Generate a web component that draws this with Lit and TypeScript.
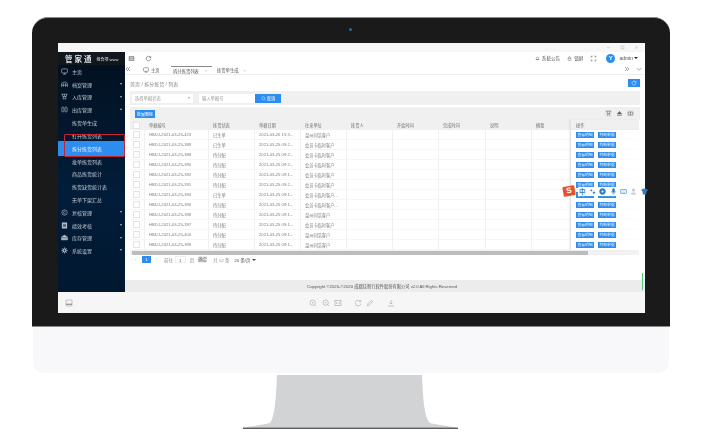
import { LitElement, css, html, svg } from 'lit';
import { customElement } from 'lit/decorators.js';

const NAV = [
  { label: '主页', icon: 'monitor' },
  { label: '档案管理', icon: 'book', caret: 'down' },
  { label: '入库管理', icon: 'shelf', caret: 'down' },
  { label: '出库管理', icon: 'columns', caret: 'up' },
  { label: '拣货单生成', sub: true },
  { label: '打开拣货列表', sub: true },
  { label: '拆分拣货列表', sub: true, active: true },
  { label: '批单拣货列表', sub: true },
  { label: '商品拣货统计', sub: true },
  { label: '拣货缺货统计表', sub: true },
  { label: '无单下架汇总', sub: true },
  { label: '复核管理', icon: 'circle', caret: 'down' },
  { label: '绩效考核', icon: 'list', caret: 'down' },
  { label: '库存管理', icon: 'box', caret: 'down' },
  { label: '系统设置', icon: 'gear', caret: 'down' },
];

const COLS = ['单据编号', '拣货状态', '单据日期', '往来单位', '拣货人', '开始时间', '完成时间', '说明', '摘要'];

const W = '温州同浩客户';
const H = '会员卡临时客户';
const ROWS = [
  ['423', '已生单', '03-26 15:3...', W],
  ['389', '已生单', '03-25 09:2...', H],
  ['388', '待分配', '03-25 09:2...', H],
  ['390', '待分配', '03-25 09:2...', H],
  ['392', '待分配', '03-25 09:1...', H],
  ['391', '待分配', '03-25 09:2...', H],
  ['394', '已生单', '03-25 09:1...', H + '...'],
  ['396', '待分配', '03-25 09:1...', H + '...'],
  ['398', '待分配', '03-25 09:1...', W],
  ['397', '待分配', '03-25 09:1...', H],
  ['400', '待分配', '03-25 09:1...', W],
  ['399', '待分配', '03-25 09:1...', W],
];

const ICONS: Record<string, unknown> = {
  minus: svg`<path d="M2.5 6h7"/>`,
  square: svg`<rect x="2.5" y="2.5" width="7" height="7"/>`,
  close: svg`<path d="M3 3l6 6M9 3l-6 6"/>`,
  monitor: svg`<rect x="1" y="1.5" width="10" height="7" rx="1.5"/><path d="M6 8.5v2M3.5 10.5h5"/>`,
  book: svg`<path d="M1 10V5c0-2 2-3 5-3s5 1 5 3v5M1 7h10M4 4v6M8 4v6"/>`,
  shelf: svg`<path d="M1 2h10M2 2l1 4h6l1-4M4 6v4M8 6v4M3 10h6M6 2v4"/>`,
  columns: svg`<rect x="1.5" y="2" width="3.5" height="8" rx=".6"/><rect x="7" y="2" width="3.5" height="8" rx=".6"/>`,
  circle: svg`<circle cx="6" cy="6" r="4.6"/><path d="M7.6 4.6a2 2 0 1 0 0 2.8"/>`,
  list: svg`<rect x="2" y="1.5" width="8" height="9" fill="currentColor"/><path d="M3.5 4h5M3.5 6h5M3.5 8h5" stroke="#02162c"/>`,
  box: svg`<path d="M1 5l5-3 5 3v5H1z" fill="currentColor"/><path d="M1 6.5h10" stroke="#02162c"/>`,
  gear: svg`<circle cx="6" cy="6" r="2.6" stroke-width="2"/><path d="M6 1v1.6M6 9.4V11M1 6h1.6M9.4 6H11M2.5 2.5l1.1 1.1M8.4 8.4l1.1 1.1M2.5 9.5l1.1-1.1M8.4 3.6l1.1-1.1" stroke-width="1.6"/>`,
  menu: svg`<path d="M2 2.5h8v7H2zM2 5h8M2 7h8"/>`,
  refresh: svg`<path d="M9.5 4.2A4 4 0 1 0 10 6.5M9.8 2v2.6H7.2"/>`,
  bell: svg`<path d="M3 8.5V5.5a3 3 0 0 1 6 0v3zM2 8.5h8M5.5 10h1"/>`,
  lock: svg`<rect x="2.5" y="5" width="7" height="5"/><path d="M4 5V3.5a2 2 0 0 1 4 0V5"/>`,
  expand: svg`<path d="M2 4.5V2h2.5M7.5 2H10v2.5M10 7.5V10H7.5M4.5 10H2V7.5"/>`,
  left2: svg`<path d="M6 2L2 6l4 4M10 2L6 6l4 4"/>`,
  right2: svg`<path d="M2 2l4 4-4 4M6 2l4 4-4 4"/>`,
  chevron: svg`<path d="M1.5 4L6 8.5 10.5 4"/>`,
  search: svg`<circle cx="5.4" cy="5.4" r="3.6"/><path d="M8 8l2.6 2.6"/>`,
  filter: svg`<path d="M1.5 2h9M3 2l1 4h4l1-4M4.5 6v4M7.5 6v4"/>`,
  up: svg`<path d="M6 2.5L10 7H2z" fill="currentColor"/><path d="M2 9.5h8"/>`,
  grid: svg`<path d="M2 3.5h8v5H2zM6 3.5v5"/>`,
  dock: svg`<rect x="1.5" y="1.5" width="9" height="9" rx="1"/><path d="M1.5 8h9" stroke-width="2"/>`,
  zoomin: svg`<circle cx="5.5" cy="5.5" r="4"/><path d="M8.5 8.5l2 2M5.5 4.5v2M4.5 5.5h2"/>`,
  zoomout: svg`<circle cx="5.5" cy="5.5" r="4"/><path d="M8.5 8.5l2 2M4 5.5h3"/>`,
  fit: svg`<rect x="1.5" y="2" width="9" height="8"/><path d="M4 4.5v3M8 4.5v3M6 5v.1M6 7v.1"/>`,
  rotate: svg`<path d="M9.5 3.6A4.2 4.2 0 1 0 10.3 7M9.8 1.6v2.6H7.2"/>`,
  pen: svg`<path d="M2 10l1-3 5-5 2 2-5 5z"/>`,
  download: svg`<path d="M6 1.5v6M3.8 5.4L6 7.6l2.2-2.2M1.5 10.5h9"/>`,
  dots: svg`<circle cx="4" cy="4" r="1.2" fill="currentColor"/><circle cx="8.5" cy="8" r="1.5" fill="currentColor"/>`,
  mic: svg`<rect x="4.2" y="1" width="3.6" height="6.4" rx="1.8" fill="currentColor"/><path d="M2.6 5.6a3.4 3.4 0 0 0 6.8 0M6 9v2"/>`,
  keyboard: svg`<rect x="1" y="2.5" width="10" height="7" rx=".8"/><path d="M3 7.5h6M3 5h6" stroke-dasharray="1 1"/>`,
  person: svg`<circle cx="6" cy="3.6" r="2.2" fill="currentColor"/><path d="M2 10.5c0-3 8-3 8 0z" fill="currentColor"/>`,
  shirt: svg`<path d="M1 3l3-1.5h4L11 3l-1 2.5-1.4-.6V10.5H3.4V4.9L2 5.5z" fill="currentColor"/>`,
  dial: svg`<circle cx="6" cy="6" r="5" fill="currentColor"/><circle cx="6" cy="6" r="1.7" fill="#fff" stroke="none"/>`,
};

function icon(name: string, cls = '') {
  return html`<svg class="ic ${cls}" viewBox="0 0 12 12">${ICONS[name]}</svg>`;
}

@customElement('app-root')
export class AppRoot extends LitElement {
  static styles = css`
    :host {
      display: block;
      position: relative;
      box-sizing: border-box;
      width: 712px;
      height: 445px;
      padding: 17px 0 0 32px;
      overflow: hidden;
      background: #fff;
      font-family: 'Liberation Sans', 'Noto Sans CJK SC', sans-serif;
      font-size: 5px;
      color: #666;
    }
    .ic {
      display: block;
      width: 7px;
      height: 7px;
      fill: none;
      stroke: currentColor;
      stroke-width: 1;
      flex: none;
    }
    .bezel {
      box-sizing: border-box;
      width: 638px;
      height: 310px;
      padding: 25px 25px 14px 26px;
      background: #1a1a1a;
      border-top: 1px solid #8a8a8a;
      border-bottom: 1px solid #8a8a8a;
      border-radius: 16px 16px 0 0;
      position: relative;
    }
    .camera {
      position: absolute;
      left: 317px;
      top: 10px;
      width: 3px;
      height: 3px;
      border-radius: 50%;
      background: #2b6f94;
    }
    .chin {
      width: 636px;
      height: 46px;
      margin-left: 1px;
      border-radius: 0 0 10px 10px;
      background: #f8f7fa;
    }
    .stand {
      display: block;
      margin: 2px 0 0 211px;
    }
    .screen {
      width: 587px;
      height: 270px;
      background: #f6f6f6;
      display: flex;
      flex-direction: column;
      filter: blur(0.5px);
    }
    .titlebar {
      height: 9px;
      flex: none;
      display: flex;
      justify-content: flex-end;
      align-items: center;
      gap: 9px;
      padding-right: 6px;
      color: #aaa;
    }
    .titlebar .ic { width: 5px; height: 5px; }
    .body { display: flex; height: 240px; flex: none; }
    .side {
      width: 67px;
      flex: none;
      background: linear-gradient(#02101f, #021d3a 60%, #01182f);
      border-bottom: 1px solid #111;
      box-sizing: border-box;
      color: #c3cad2;
    }
    .logo {
      height: 13px;
      background: #12171d;
      display: flex;
      align-items: center;
      padding-left: 7px;
      gap: 3px;
      color: #dfe3e6;
      white-space: nowrap;
    }
    .logo b { font-size: 7.5px; letter-spacing: 2px; font-weight: 700; }
    .logo span { font-size: 4px; }
    .item {
      height: 12.8px;
      display: flex;
      align-items: center;
      padding-left: 3px;
      white-space: nowrap;
      position: relative;
      font-size: 5px;
    }
    .item .ic { width: 7px; height: 7px; margin-right: 4px; }
    .item.sub { padding-left: 14px; }
    .item.active {
      background: #2d8cf0;
      color: #e8f2fd;
      height: 15px;
      margin: -1px 0;
    }
    .caret {
      position: absolute;
      right: 3px;
      top: 5px;
      border: 1.5px solid transparent;
      border-top: 2px solid #aeb6bf;
      border-bottom: 0;
    }
    .caret.up { border-top: 0; border-bottom: 2px solid #aeb6bf; }
    .main {
      flex: 1;
      min-width: 0;
      display: flex;
      flex-direction: column;
      background: #fff;
    }
    .top {
      height: 12px;
      display: flex;
      align-items: center;
      padding: 0 7px 0 3px;
      color: #555;
    }
    .top > .ic + .ic { margin-left: 10px; }
    .top .grow { flex: 1; }
    .top .link { display: flex; align-items: center; gap: 2px; margin-right: 7px; white-space: nowrap; font-size: 4.6px; }
    .top .link .ic { width: 5px; height: 5px; }
    .avatar {
      width: 9px;
      height: 9px;
      border-radius: 50%;
      background: #2d8cf0;
      margin: 0 4px 0 9px;
      color: #fff;
      font-size: 6px;
      line-height: 9px;
      text-align: center;
      font-weight: 700;
    }
    .admin { display: flex; align-items: center; gap: 1px; }
    .admin i { border: 2px solid transparent; border-top: 2px solid #222; border-bottom: 0; }
    .tabs {
      height: 10px;
      border-bottom: 1px solid #eee;
      display: flex;
      align-items: center;
      padding: 0 3px 0 0;
      color: #555;
      white-space: nowrap;
      font-size: 4.3px;
    }
    .tab { display: flex; align-items: center; height: 8px; margin-top: 2px; box-sizing: border-box; }
    .tab.home { margin-left: 12px; gap: 2px; width: 28px; }
    .tab.cur { width: 41px; border-top: 1px solid #888; padding-left: 2px; gap: 6px; }
    .tab.next { margin-left: 5px; gap: 5px; }
    .tab small { font-size: 4px; color: #aaa; }
    .tabs .grow { flex: 1; }
    .tabs .ic { width: 6px; height: 6px; }
    .tabs .ic.wide { margin-right: 6px; }
    .crumb {
      height: 16px;
      padding: 0 5px 0 5px;
      display: flex;
      align-items: center;
      justify-content: space-between;
      color: #888;
    }
    .crumb button {
      width: 12px;
      height: 8px;
      border: 0;
      padding: 1px 3px;
      background: #2d8cf0;
      color: #fff;
      margin-right: 0;
    }
    .crumb .ic { width: 6px; height: 6px; }
    .filter {
      margin: 0 5px;
      height: 14px;
      background: #f0f0f0;
      display: flex;
      align-items: center;
      padding-left: 2px;
      flex: none;
      color: #999;
      font-size: 4.3px;
    }
    .select, .input {
      height: 9px;
      background: #fff;
      display: flex;
      align-items: center;
      box-sizing: border-box;
      padding: 0 3px;
      white-space: nowrap;
    }
    .select { width: 61px; justify-content: space-between; margin-right: 6px; }
    .select i { border: 1.5px solid transparent; border-top: 2px solid #aaa; border-bottom: 0; }
    .input { width: 56px; }
    .search {
      width: 26px;
      height: 9px;
      background: #2d8cf0;
      color: #fff;
      display: flex;
      align-items: center;
      justify-content: center;
      gap: 1px;
    }
    .search .ic { width: 5px; height: 5px; }
    .panel {
      margin: 2px 5px 0;
      background: #fff;
      position: relative;
    }
    .bar {
      height: 13px;
      background: #f0f0f0;
      display: flex;
      align-items: center;
      justify-content: space-between;
      padding: 0 6px 0 5px;
    }
    .bar button {
      width: 20px;
      height: 8px;
      border: 0;
      padding: 0;
      background: #2d8cf0;
      color: #fff;
      font: inherit;
      font-size: 4px;
    }
    .tools { display: flex; gap: 4px; color: #666; }
    .tools span { width: 7px; height: 7px; background: #e8e8e8; padding: 0; display: block; }
    .tools .ic { width: 7px; height: 7px; }
    .table {
      display: grid;
      grid-template-columns: 15px 64px 46px 46px 46px 46px 46px 47px 46px 39px 68px;
      grid-auto-rows: 10px;
      width: 509px;
    }
    .table > div {
      display: flex;
      align-items: center;
      padding-left: 4px;
      box-sizing: border-box;
      white-space: nowrap;
      overflow: hidden;
      font-size: 4.2px;
      color: #808080;
    }
    .head { background: #f0f0f0; }
    .table > .head { color: #707070; }
    .cell { border-right: 1px solid #f0f0f0; border-bottom: 1px solid #f6f6f6; }
    .table > .check { padding-left: 3px; }
    .check i { width: 5px; height: 5px; border: 1px solid #e4e4e4; background: #fff; display: block; }
    .table > .ops {
      gap: 4px;
      box-shadow: -2px 0 2px rgba(0, 0, 0, .06);
      background: #fff;
      padding-left: 5px;
      position: relative;
    }
    .ops b {
      width: 18px;
      height: 6px;
      background: #2d8cf0;
      color: #e6f1fd;
      font-weight: 400;
      font-size: 3.8px;
      line-height: 6px;
      text-align: center;
      flex: none;
    }
    .table > .ops.head { background: #f0f0f0; }
    .scroll {
      height: 5px;
      background: #f2f2f2;
      display: flex;
      align-items: center;
      margin-right: 1px;
    }
    .scroll i { display: block; width: 456px; height: 4px; margin-left: 2px; background: #bcbcbc; }
    .pager {
      display: flex;
      align-items: center;
      height: 9px;
      padding-left: 5px;
      color: #888;
      white-space: nowrap;
      font-size: 4.4px;
    }
    .pager .arrow { width: 7px; color: #bbb; }
    .pager .cur {
      width: 9px;
      height: 7px;
      margin-right: 4px;
      background: #2d8cf0;
      color: #fff;
      text-align: center;
      line-height: 7px;
    }
    .pager .goto { margin-left: 2px; }
    .pager .box { width: 11px; height: 7px; text-align: center; line-height: 7px; border: 1px solid #eee; box-sizing: border-box; margin: 0 4px 0 2px; color: #555; }
    .pager .ok { width: 9px; height: 7px; line-height: 7px; text-align: center; background: #f0f0f0; margin: 0 6px 0 4px; color: #555; }
    .pager .size { margin-left: 5px; color: #555; display: flex; align-items: center; gap: 2px; }
    .pager .size i { border: 2px solid transparent; border-top: 2px solid #444; border-bottom: 0; }
    .spacer { flex: 1; }
    .copyright {
      height: 12px;
      background: #ececed;
      flex: none;
      display: flex;
      align-items: center;
      justify-content: center;
      padding-right: 6px;
      color: #555;
      font-size: 4.25px;
      white-space: nowrap;
      position: relative;
    }
    .green {
      position: absolute;
      right: 2px;
      top: -7px;
      width: 1px;
      height: 17px;
      background: #55c878;
    }
    .bottom {
      flex: 1;
      display: flex;
      align-items: center;
      padding-left: 7px;
      color: #999;
    }
    .bottom .ic { width: 8px; height: 8px; stroke-width: .8; }
    .viewer { display: flex; align-items: center; margin-left: 236px; }
    .viewer .ic { margin-right: 4.5px; }
    .viewer .gap1 { margin-left: 7px; }
    .viewer .gap2 { margin-left: 8px; }
    .redbox {
      position: absolute;
      left: 64px;
      top: 134px;
      width: 59px;
      height: 21px;
      border: 1.5px solid #c8242c;
      border-radius: 1px;
    }
    .ime {
      position: absolute;
      left: 578px;
      top: 187px;
      width: 67px;
      height: 9px;
      background: #fff;
      display: flex;
      align-items: center;
      padding-left: 1px;
      gap: 3.4px;
      color: #2f7fc4;
      box-sizing: border-box;
    }
    .ime span { font-size: 6.5px; font-weight: 700; line-height: 9px; width: 7px; }
    .ime .ic { width: 7px; height: 7px; }
    .ime .gray { color: #c9c9c9; }
    .sogou {
      position: absolute;
      left: 563px;
      top: 186px;
      width: 12px;
      height: 10px;
      background: #e8512a;
      color: #fff;
      font: 700 8px/10px 'Liberation Sans', sans-serif;
      text-align: center;
      transform: rotate(-10deg);
      border-radius: 1px;
    }
  `;

  render() {
    return html`
      <div class="bezel">
        <div class="camera"></div>
        <div class="screen">
          <div class="titlebar">${icon('minus')}${icon('square')}${icon('close')}</div>
          <div class="body">
            <div class="side">
              <div class="logo"><b>管家通</b><span>组合项 www</span></div>
              ${NAV.map(
                (n) => html`<div class="item ${n.sub ? 'sub' : ''} ${n.active ? 'active' : ''}">
                  ${n.icon ? icon(n.icon) : ''}${n.label}
                  ${n.caret ? html`<i class="caret ${n.caret}"></i>` : ''}
                </div>`,
              )}
            </div>
            <div class="main">
              <div class="top">
                ${icon('menu')}${icon('refresh')}
                <div class="grow"></div>
                <div class="link">${icon('bell')}系统公告</div>
                <div class="link">${icon('lock')}锁屏</div>
                ${icon('expand')}
                <div class="avatar">Y</div>
                <div class="admin">admin<i></i></div>
              </div>
              <div class="tabs">
                ${icon('left2')}
                <div class="tab home">${icon('monitor')}主页</div>
                <div class="tab cur">拆分拣货列表<small>×</small></div>
                <div class="tab next">拣货单生成<small>×</small></div>
                <div class="grow"></div>
                ${icon('right2', 'wide')}${icon('chevron')}
              </div>
              <div class="crumb">
                <span>首页 / 拆分拣货 / 列表</span>
                <button>${icon('refresh')}</button>
              </div>
              <div class="filter">
                <div class="select">选择单据状态<i></i></div>
                <div class="input">输入单据号</div>
                <div class="search">${icon('search')}查询</div>
              </div>
              <div class="panel">
                <div class="bar">
                  <button>批量删除</button>
                  <div class="tools"><span>${icon('filter')}</span>${icon('up')}<span>${icon('grid')}</span></div>
                </div>
                <div class="table">
                  <div class="head check"><i></i></div>
                  ${COLS.map((c) => html`<div class="head">${c}</div>`)}
                  <div class="head ops">操作</div>
                  ${ROWS.map(
                    (r) => html`
                      <div class="cell check"><i></i></div>
                      <div class="cell">HBDJ-2021-03-${r[0] === '423' ? '26' : '25'}-${r[0]}</div>
                      <div class="cell">${r[1]}</div>
                      <div class="cell">2021-${r[2]}</div>
                      <div class="cell">${r[3]}</div>
                      <div class="cell"></div>
                      <div class="cell"></div>
                      <div class="cell"></div>
                      <div class="cell"></div>
                      <div class="cell"></div>
                      <div class="ops"><b>查看明细</b><b>判断单据</b></div>
                    `,
                  )}
                </div>
                <div class="scroll"><i></i></div>
                <div class="pager">
                  <span class="arrow">‹</span><span class="cur">1</span><span class="arrow">›</span>
                  <span class="goto">前往</span><span class="box">1</span><span>页</span>
                  <span class="ok">确定</span><span>共 12 条</span>
                  <span class="size">20 条/页<i></i></span>
                </div>
              </div>
              <div class="spacer"></div>
              <div class="copyright">
                Copyright ©2020-©2020 成都佳智行软件股份有限公司 v2.0 All Rights Reserved
                <div class="green"></div>
              </div>
            </div>
          </div>
          <div class="bottom">
            ${icon('dock')}
            <div class="viewer">
              ${icon('zoomin')}${icon('zoomout')}${icon('fit')}
              <span class="gap1">${icon('rotate')}</span>${icon('pen')}
              <span class="gap2">${icon('download')}</span>
            </div>
          </div>
        </div>
      </div>
      <div class="chin"></div>
      <svg class="stand" width="216" height="56" viewBox="0 0 216 56">
        <path d="M34 0H179C180 22 181 42 187 48C194 50 207 51 215 53H0C8 51 21 50 27 48C32 42 33 22 34 0Z" fill="#d2d3d5"/>
        <rect y="52.6" width="215" height="1.4" fill="#5e5e5e"/>
      </svg>
      <div class="redbox"></div>
      <div class="sogou">S</div>
      <div class="ime">
        <span>中</span>${icon('dots')}${icon('dial')}${icon('mic')}${icon('keyboard')}${icon('person', 'gray')}${icon('shirt')}
      </div>
    `;
  }
}
